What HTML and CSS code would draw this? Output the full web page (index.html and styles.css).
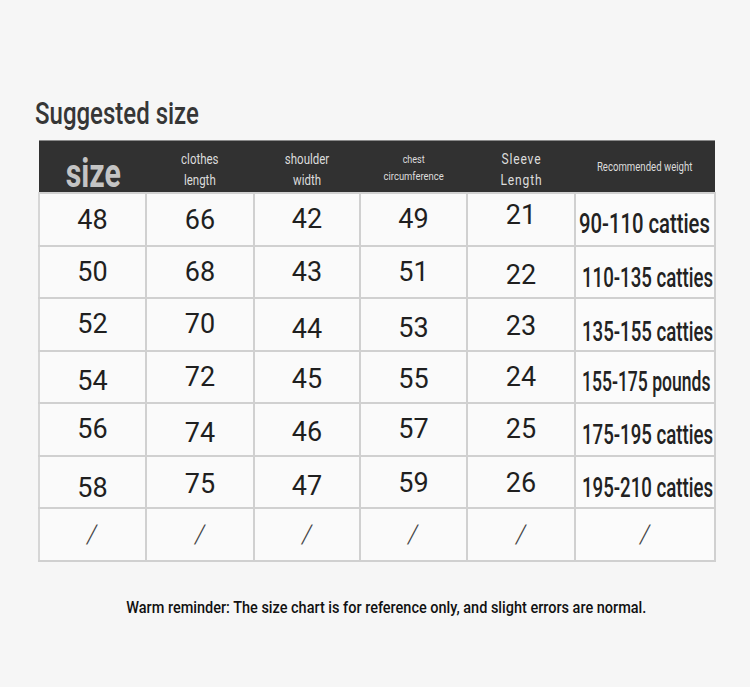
FILE: index.html
```html
<!DOCTYPE html>
<html>
<head>
<meta charset="utf-8">
<link rel="stylesheet" href="styles.css">
</head>
<body>
<div class="page">
  <h1 class="title"><span class="cond">Suggested size</span></h1>
  <table class="chart">
    <thead>
      <tr>
        <th class="h-size"><div class="c"><span class="cond">size</span></div></th>
        <th><div class="c"><span class="cond h13">clothes<br>length</span></div></th>
        <th><div class="c"><span class="cond h13">shoulder<br>width</span></div></th>
        <th><div class="c"><span class="cond h-chest"><span class="sm">chest</span><br>circumference</span></div></th>
        <th><div class="c"><span class="cond h13 sleeve">Sleeve<br>Length</span></div></th>
        <th class="h-weight"><div class="c"><span class="cond">Recommended weight</span></div></th>
      </tr>
    </thead>
    <tbody>
      <tr>
        <td><span class="num d1">48</span></td><td><span class="num d1">66</span></td><td><span class="num">42</span></td><td><span class="num">49</span></td><td><span class="num u4">21</span></td><td class="w"><div class="wl"><span class="cond wt d5 first">90-110 catties</span></div></td>
      </tr>
      <tr>
        <td><span class="num">50</span></td><td><span class="num">68</span></td><td><span class="num">43</span></td><td><span class="num">51</span></td><td><span class="num d3">22</span></td><td class="w"><div class="wl"><span class="cond wt d6">110-135 catties</span></div></td>
      </tr>
      <tr>
        <td><span class="num">52</span></td><td><span class="num">70</span></td><td><span class="num d5">44</span></td><td><span class="num d4">53</span></td><td><span class="num d2">23</span></td><td class="w"><div class="wl"><span class="cond wt d8">135-155 catties</span></div></td>
      </tr>
      <tr>
        <td><span class="num d4">54</span></td><td><span class="num">72</span></td><td><span class="num d2">45</span></td><td><span class="num d2">55</span></td><td><span class="num">24</span></td><td class="w"><div class="wl"><span class="cond wt d5 pounds">155-175 pounds</span></div></td>
      </tr>
      <tr>
        <td><span class="num">56</span></td><td><span class="num d4">74</span></td><td><span class="num d3">46</span></td><td><span class="num">57</span></td><td><span class="num">25</span></td><td class="w"><div class="wl"><span class="cond wt d6">175-195 catties</span></div></td>
      </tr>
      <tr>
        <td><span class="num d6">58</span></td><td><span class="num d2">75</span></td><td><span class="num d4">47</span></td><td><span class="num d1">59</span></td><td><span class="num d1">26</span></td><td class="w"><div class="wl"><span class="cond wt d6">195-210 catties</span></div></td>
      </tr>
      <tr class="slash">
        <td><span class="sl">/</span></td><td><span class="sl">/</span></td><td><span class="sl">/</span></td><td><span class="sl">/</span></td><td><span class="sl">/</span></td><td class="w"><span class="sl">/</span></td>
      </tr>
    </tbody>
  </table>
  <div class="note"><span class="cond">Warm reminder: The size chart is for reference only, and slight errors are normal.</span></div>
</div>
</body>
</html>
```
FILE: styles.css
```css
html, body {
  margin: 0;
  padding: 0;
}
body {
  background: #f6f6f6;
  font-family: Roboto, "Liberation Sans", sans-serif;
  color: #222;
}
.page {
  width: 750px;
  height: 687px;
  padding-top: 94px;
  box-sizing: border-box;
}
.cond {
  display: inline-block;
  transform: scaleX(0.82);
  white-space: nowrap;
}
.c {
  display: flex;
  justify-content: center;
  align-items: center;
}
.wl {
  display: flex;
  justify-content: flex-start;
  align-items: center;
  padding-left: 6px;
}
.title {
  margin: 0 0 0 35px;
  font-size: 32px;
  font-weight: 500;
  line-height: 38px;
  color: #363636;
  height: 46px;
}
.title .cond {
  transform-origin: left center;
  transform: scaleX(0.75);
}
.chart {
  margin-left: 38px;
  width: 676px;
  border-collapse: collapse;
  table-layout: fixed;
}
.chart th, .chart td {
  padding: 0;
  text-align: center;
  vertical-align: middle;
}
.chart thead tr {
  background: #313131;
  height: 51px;
}
.chart th {
  color: #dcdcdc;
  font-weight: 400;
  border-top: 1px solid #8a8a8a;
}
.chart th:first-child { width: 107px; }
.chart th:nth-child(2) { width: 108px; }
.chart th:nth-child(3) { width: 106px; }
.chart th:nth-child(4) { width: 107px; }
.chart th:nth-child(5) { width: 108px; }
.chart th:nth-child(6) { width: 140px; }
.chart th.h-size {
  font-size: 41px;
  font-weight: 700;
  color: #c4c4c4;
  line-height: 1;
}
.chart th.h-size .c {
  padding-top: 13px;
  height: 38px;
  padding-left: 2px;
}
.h-size .cond {
  transform: scaleX(0.74);
}
.h13 {
  font-size: 14px;
  line-height: 21px;
  margin-top: 7px;
}
.sleeve {
  letter-spacing: 1px;
  transform: scaleX(0.86);
}
.h-chest {
  font-size: 11.5px;
  line-height: 17px;
  margin-top: 3px;
}
.h-chest .sm {
  font-size: 11px;
}
.h-weight {
  font-size: 12px;
}
.h-weight .cond {
  transform: scaleX(0.8);
}
.chart tbody tr {
  height: 52.5px;
}
.chart td {
  background: #fafafa;
  border: 2px solid #d0d0d0;
}
.chart td:first-child {
  border-left: 2px solid #d6d6d6;
}
.chart td.w {
  background: #fbfbfb;
  border-left: 2px solid #e2e2e2;
  border-right: 2px solid #d0d0d0;
}
.num {
  display: inline-block;
  font-size: 27px;
  line-height: 30px;
  color: #1f1f1f;
}
.wt {
  font-size: 27px;
  font-weight: 500;
  line-height: 30px;
  color: #222;
  transform-origin: left center;
  transform: scaleX(0.69);
}
.wt.first {
  transform: scaleX(0.75);
  margin-left: -3px;
}
.wt.pounds {
  transform: scaleX(0.65);
}
.sl {
  display: inline-block;
  font-size: 26px;
  font-weight: 300;
  color: #444;
  transform: skewX(-8deg);
}
.d1 { translate: 0 1px; }
.d2 { translate: 0 2px; }
.d3 { translate: 0 3px; }
.d4 { translate: 0 4px; }
.d5 { translate: 0 5px; }
.d6 { translate: 0 6px; }
.d8 { translate: 0 8px; }
.u4 { translate: 0 -4px; }
.note {
  margin-top: 36px;
  display: flex;
  justify-content: center;
  font-size: 16px;
  font-weight: 500;
  color: #111;
  padding-left: 22px;
}
.note .cond {
  transform: scaleX(0.905);
}
```
